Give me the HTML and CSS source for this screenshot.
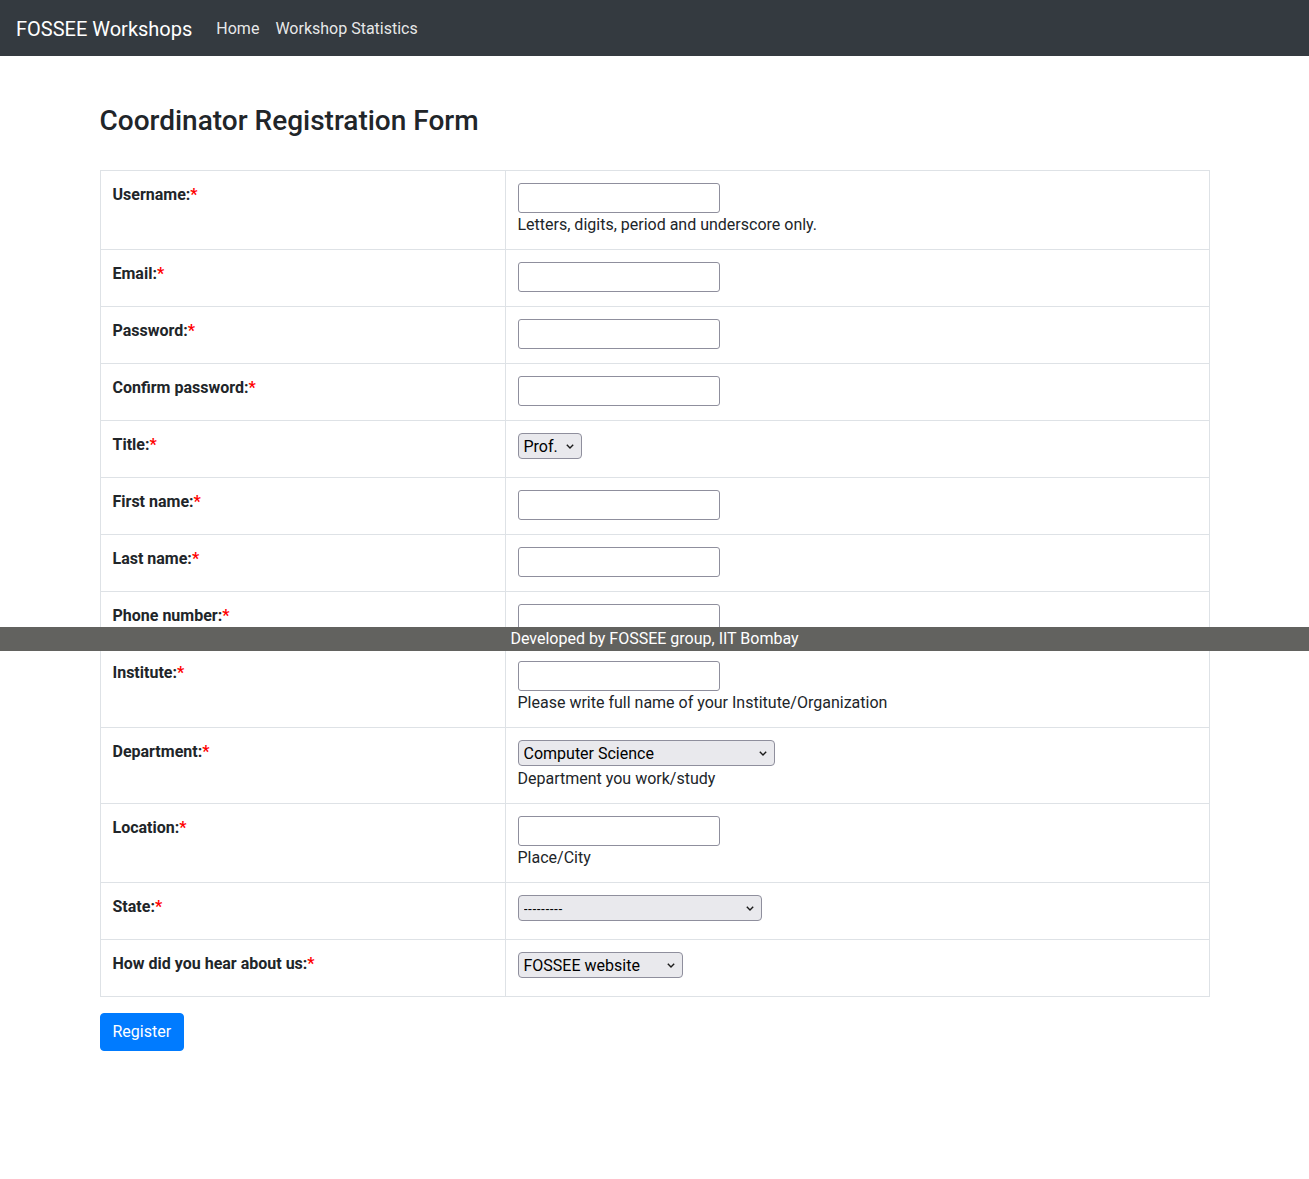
FILE: index.html
```html
<!DOCTYPE html>
<html lang="en">
<head>
<meta charset="utf-8">
<title>Coordinator Registration Form</title>
<link rel="stylesheet" href="styles.css">
</head>
<body>
<nav class="navbar">
  <a class="brand" href="#">FOSSEE Workshops</a>
  <a class="nav-link" href="#">Home</a>
  <a class="nav-link" href="#">Workshop Statistics</a>
</nav>

<main class="container">
  <h3 class="title">Coordinator Registration Form</h3>
  <form>
    <table class="form-table">
      <colgroup><col class="col-label"><col class="col-field"></colgroup>
      <tr>
        <th>Username:<span class="req">*</span></th>
        <td><div class="field"><input type="text"><div class="help">Letters, digits, period and underscore only.</div></div></td>
      </tr>
      <tr>
        <th>Email:<span class="req">*</span></th>
        <td><div class="field"><input type="email"></div></td>
      </tr>
      <tr>
        <th>Password:<span class="req">*</span></th>
        <td><div class="field"><input type="password"></div></td>
      </tr>
      <tr>
        <th>Confirm password:<span class="req">*</span></th>
        <td><div class="field"><input type="password"></div></td>
      </tr>
      <tr>
        <th>Title:<span class="req">*</span></th>
        <td><div class="field"><span class="select-wrap sel-title"><select><option>Prof.</option></select><svg class="chev" viewBox="0 0 8 5" width="8" height="5"><path d="M0.8 0.8 L4 4 L7.2 0.8" fill="none" stroke="#1b1b1b" stroke-width="1.4"/></svg></span></div></td>
      </tr>
      <tr>
        <th>First name:<span class="req">*</span></th>
        <td><div class="field"><input type="text"></div></td>
      </tr>
      <tr>
        <th>Last name:<span class="req">*</span></th>
        <td><div class="field"><input type="text"></div></td>
      </tr>
      <tr>
        <th>Phone number:<span class="req">*</span></th>
        <td><div class="field"><input type="text"></div></td>
      </tr>
      <tr>
        <th>Institute:<span class="req">*</span></th>
        <td><div class="field"><input type="text"><div class="help">Please write full name of your Institute/Organization</div></div></td>
      </tr>
      <tr>
        <th>Department:<span class="req">*</span></th>
        <td><div class="field"><span class="select-wrap sel-dept"><select><option>Computer Science</option></select><svg class="chev" viewBox="0 0 8 5" width="8" height="5"><path d="M0.8 0.8 L4 4 L7.2 0.8" fill="none" stroke="#1b1b1b" stroke-width="1.4"/></svg></span><div class="help help-after-select">Department you work/study</div></div></td>
      </tr>
      <tr>
        <th>Location:<span class="req">*</span></th>
        <td><div class="field"><input type="text"><div class="help">Place/City</div></div></td>
      </tr>
      <tr>
        <th>State:<span class="req">*</span></th>
        <td><div class="field"><span class="select-wrap sel-state"><select class="small"><option>---------</option></select><svg class="chev" viewBox="0 0 8 5" width="8" height="5"><path d="M0.8 0.8 L4 4 L7.2 0.8" fill="none" stroke="#1b1b1b" stroke-width="1.4"/></svg></span></div></td>
      </tr>
      <tr>
        <th>How did you hear about us:<span class="req">*</span></th>
        <td><div class="field"><span class="select-wrap sel-how"><select><option>FOSSEE website</option></select><svg class="chev" viewBox="0 0 8 5" width="8" height="5"><path d="M0.8 0.8 L4 4 L7.2 0.8" fill="none" stroke="#1b1b1b" stroke-width="1.4"/></svg></span></div></td>
      </tr>
    </table>
    <button type="submit" class="btn-primary">Register</button>
  </form>
</main>

<footer class="footer">Developed by FOSSEE group, IIT Bombay</footer>
</body>
</html>
```

FILE: styles.css
```css
* { box-sizing: border-box; }

html, body {
  margin: 0;
  padding: 0;
}

body {
  font-family: Roboto, "Liberation Sans", Arial, sans-serif;
  font-size: 16px;
  line-height: 1.5;
  color: #212529;
  background: #fff;
  position: relative;
  min-height: 1179px;
}

a { text-decoration: none; }

.navbar {
  display: flex;
  align-items: center;
  height: 56px;
  padding: 10px 16px 8px;
  background: #343a40;
}

.brand {
  font-size: 20px;
  line-height: 30px;
  color: #fff;
  margin-right: 16px;
}

.nav-link {
  color: rgba(255, 255, 255, 0.9);
  padding: 8px;
  font-size: 16px;
  line-height: 24px;
}

.container {
  width: 1110px;
  margin: 0 auto;
  padding-top: 48px;
}

.title {
  font-size: 28px;
  font-weight: 500;
  line-height: 1.2;
  margin: 0 0 32px;
  color: #212529;
}

.form-table {
  width: 100%;
  border-collapse: collapse;
  border: 1px solid #dee2e6;
  margin-bottom: 16px;
}

.col-label { width: 405px; }

.form-table th,
.form-table td {
  border: 1px solid #dee2e6;
  padding: 12px;
  vertical-align: top;
  text-align: left;
}

.form-table th {
  font-weight: 700;
}

.req { color: #ff0000; }

.field {
  min-height: 32px;
}

.field input {
  display: block;
  width: 202px;
  height: 30px;
  border: 1px solid #8f8f9d;
  border-radius: 3px;
  background: #fff;
  padding: 1px 4px;
  font: inherit;
  margin: 0;
}

.help {
  line-height: 24px;
}

.help-after-select {
  margin-top: 1px;
}

.select-wrap {
  position: relative;
  display: block;
  height: 26px;
}

.select-wrap select {
  -webkit-appearance: none;
  appearance: none;
  display: block;
  width: 100%;
  height: 26px;
  margin: 0;
  border: 1px solid #8f8f9d;
  border-radius: 4px;
  background: #e9e9ed;
  color: #000;
  font-family: Roboto, "Liberation Sans", Arial, sans-serif;
  font-size: 16px;
  line-height: 21px;
  padding: 2px 20px 0 5px;
}

.select-wrap select.small {
  font-size: 13px;
  font-family: "Liberation Sans", Arial, sans-serif;
}

.chev {
  position: absolute;
  right: 8px;
  top: 11px;
  pointer-events: none;
}

.sel-title { width: 64px; }
.sel-dept { width: 257px; }
.sel-state { width: 244px; }
.sel-how { width: 165px; }

.btn-primary {
  display: inline-block;
  font-family: inherit;
  font-size: 16px;
  line-height: 24px;
  padding: 6px 12px;
  color: #fff;
  background: #007bff;
  border: 1px solid #007bff;
  border-radius: 4px;
  cursor: pointer;
}

.footer {
  position: absolute;
  left: 0;
  right: 0;
  top: 627px;
  height: 24px;
  line-height: 24px;
  background: #62625f;
  color: #fff;
  text-align: center;
  font-size: 16px;
}
```
